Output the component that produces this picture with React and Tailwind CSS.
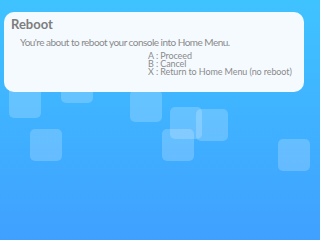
import React from "react";

const squares = [
  [9, 86], [61, 71], [130, 90], [170, 107], [196, 109], [30, 129], [162, 129], [278, 139],
];

export default function App() {
  return (
    <div className="relative w-[320px] h-[240px] overflow-hidden bg-gradient-to-b from-[#3fc3ff] to-[#40a0ff]" style={{ fontFamily: "Lato, 'Open Sans', sans-serif" }}>
      {squares.map(([x, y], i) => (
        <div key={i} className="absolute w-[32px] h-[32px] rounded-[5px] bg-white/20" style={{ left: x, top: y }} />
      ))}
      <div className="absolute left-[4px] top-[12px] w-[300px] h-[80px] rounded-[10px] bg-[#f5faff] text-[#8a8a8a]">
        <div className="pl-[7px] pt-[5px] text-[13px] font-bold leading-[14px] text-[#7d7d7d]">Reboot</div>
        <div className="pl-[16px] pt-[6px] text-[10px] leading-[10px] tracking-[-0.52px]">You're about to reboot your console into Home Menu.</div>
        <div className="pl-[144px] pt-[5px] text-[9px] leading-[8px] tracking-[-0.1px]">
          <div>A : Proceed</div>
          <div>B : Cancel</div>
          <div>X : Return to Home Menu (no reboot)</div>
        </div>
      </div>
    </div>
  );
}
